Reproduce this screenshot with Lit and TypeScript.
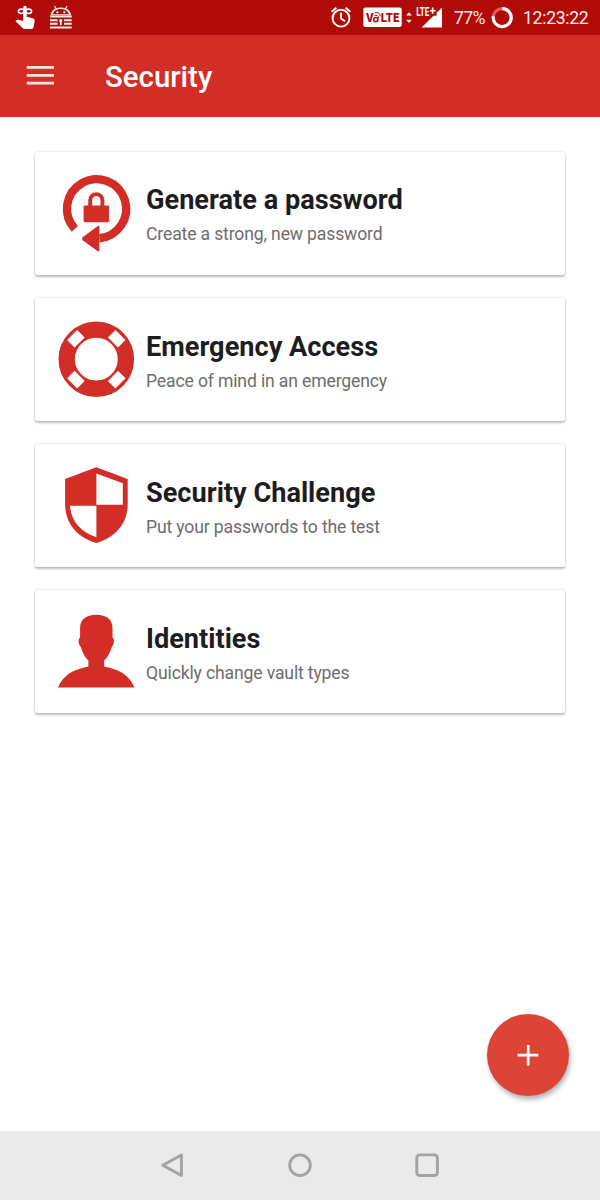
import { LitElement, html, css, svg } from "lit";
import { customElement } from "lit/decorators.js";

const generateIcon = svg`
  <path d="M74.8 228.4A29.6 29.6 0 1 1 99.5 237.8" fill="none" stroke="#d32d27" stroke-width="8.4"/>
  <path d="M83.2 237.6L98.4 226.4V250L83.2 239Z" fill="#d32d27" stroke="#d32d27" stroke-width="2" stroke-linejoin="round"/>
  <rect x="83.6" y="205" width="25.4" height="16.8" rx="1.3" fill="#d32d27"/>
  <path d="M90.2 206v-6.3a6.1 6.1 0 0 1 12.2 0v6.3" fill="none" stroke="#d32d27" stroke-width="3.9"/>`;

const emergencyIcon = svg`
  <circle cx="96.3" cy="358.7" r="29.6" fill="none" stroke="#d32d27" stroke-width="16.4"/>
  <g fill="#fff">
    ${[45, 135, 225, 315].map(
      (a) => svg`<rect x="-7.1" y="-34.2" width="14.2" height="10.6" transform="translate(96.3 358.7) rotate(${a})"/>`
    )}
  </g>`;

const challengeIcon = svg`
  <path fill="#d32d27" d="M96.3 467.3L127.7 479V504C127.7 523.5 115.5 537.5 96.3 543C77.1 537.5 65.1 523.5 65.1 504V479Z"/>
  <path fill="#fff" d="M96.4 473.4L122.8 483.3V504.7H96.4ZM96.4 505.7V537.2C81.2 532.3 71 521.5 70 505.7Z"/>`;

const identityIcon = svg`
  <path fill="#d32d27" d="M96.3 614.7C106.5 614.7 112.5 619.5 112.5 628V637.6C114.6 638.6 114.5 644.5 111.8 647C110.2 652.5 107.6 657.5 104.2 660.6V666.4C118.5 669 130 675 134.4 687.6H58C62.6 675 74.2 669 88.4 666.4V660.6C85 657.5 82.4 652.5 80.8 647C78.1 644.5 78 638.6 80.1 637.6V628C80.1 619.5 86.1 614.7 96.3 614.7Z"/>`;

const items = [
  { title: "Generate a password", text: "Create a strong, new password", icon: generateIcon, box: "51 151.5 90 123" },
  { title: "Emergency Access", text: "Peace of mind in an emergency", icon: emergencyIcon, box: "51 297.5 90 123" },
  { title: "Security Challenge", text: "Put your passwords to the test", icon: challengeIcon, box: "51 444 90 123" },
  { title: "Identities", text: "Quickly change vault types", icon: identityIcon, box: "51 590 90 123" },
];

@customElement("status-bar")
class StatusBar extends LitElement {
  static styles = css`
    :host { display: flex; height: 35px; background: #b00b09; color: #fde9e6; font-size: 17.6px; line-height: 36px; }
    svg { display: block; flex: none; }
    .spacer { flex: 1; }
    .percent { width: 36px; white-space: nowrap; letter-spacing: -0.6px; }
    .clock { width: 77px; white-space: nowrap; letter-spacing: -0.3px; }
    .tag { font: 900 12px Roboto, sans-serif; fill: #b00b09; }
    .net { font: 700 12px "Roboto", sans-serif; fill: #fff; }
  `;
  render() {
    return html`
      <svg width="90" height="35" viewBox="0 0 90 35">
        <g fill="none" stroke="#fff" stroke-width="1.6">
          <ellipse cx="21.3" cy="11.3" rx="2.9" ry="2.2"/><ellipse cx="28.7" cy="11.3" rx="2.9" ry="2.2"/>
        </g>
        <path fill="#fff" d="M23.2 8Q23.2 5.7 25 5.7Q26.8 5.7 26.8 8V16.8L33.4 18.6Q35 19.2 34.7 21L33.5 27.3Q33.1 29 31.5 29H24.6Q23.5 29 22.6 28L15.4 21.1L16.7 20Q17.4 19.5 18.5 19.8L23.2 21Z"/>
        <path fill="#ffeaea" d="M50.5 15.3C51.2 10.2 55.3 7.5 60.8 7.5S70.4 10.2 71.1 15.3Z"/>
        <path d="M54.4 6L57 10M67.2 6L64.6 10" stroke="#ffeaea" stroke-width="1.2"/>
        <path d="M52.6 14.3C53.8 10.7 56.6 9 60.8 9S67.8 10.7 69 14.3Z" fill="#b00b09"/>
        <circle cx="57.3" cy="12.3" r="1.1" fill="#fff"/><circle cx="64.3" cy="12.3" r="1.1" fill="#fff"/>
        <path d="M50 16.6H71.7M50 20.2H71.7M50 23.8H71.7M50 27.4H71.7" stroke="#ffeaea" stroke-width="2"/>
        <rect x="57.6" y="18.4" width="6.4" height="7.2" fill="#b00b09"/>
        <circle cx="60.8" cy="20.7" r="1.6" fill="#fff"/><path d="M60.8 20v5.2" stroke="#fff" stroke-width="1.6"/>
      </svg>
      <div class="spacer"></div>
      <svg width="124" height="35" viewBox="330 0 124 35">
        <g fill="none" stroke="#fff" stroke-width="1.9">
          <circle cx="341" cy="18.2" r="8.4"/>
          <path d="M341 12.8V18.6L345 21.2M331.6 11.8L336.4 7.8M350.4 11.8L345.6 7.8"/>
        </g>
        <rect x="363.3" y="7.6" width="38.4" height="19.4" rx="2" fill="#fff"/>
        <text class="tag" x="366" y="22" textLength="7.6" lengthAdjust="spacingAndGlyphs">V</text>
        <circle cx="375.8" cy="19.6" r="2.1" fill="none" stroke="#b00b09" stroke-width="1.5"/>
        <text class="tag" x="380.8" y="22" textLength="18.6" lengthAdjust="spacingAndGlyphs">LTE</text>
        <path d="M374.4 15.3Q378 14.5 378.5 18M374.8 12.7Q380 11.7 380.3 16.4" fill="none" stroke="#b00b09" stroke-width="1"/>
        <path fill="#fff" d="M409 12.3L411.8 15.6H406.2ZM409 23L411.8 19.7H406.2Z"/>
        <path fill="#fff" d="M442 7.6V27.5H421.5L433.6 15.8H436.6V12.8Z"/>
        <text class="net" x="416.2" y="16.4" textLength="13.2" lengthAdjust="spacingAndGlyphs">LTE</text>
        <path d="M432.6 7.6V13.8M429.8 10.7H435.6" stroke="#fff" stroke-width="1.6"/>
      </svg>
      <span class="percent">77%</span>
      <svg width="33" height="35" viewBox="490 0 33 35">
        <g fill="none" stroke-width="3.1"><circle cx="502.2" cy="17.6" r="9" stroke="#df5f5a"/><path d="M502.2 8.6A9 9 0 1 1 493.3 16.2" stroke="#fff"/></g>
      </svg>
      <span class="clock">12:23:22</span>`;
  }
}

@customElement("app-root")
class AppRoot extends LitElement {
  static styles = css`
    :host { display: flex; flex-direction: column; height: 1200px; background: #fff; font-family: Roboto, sans-serif; position: relative; overflow: hidden; }
    svg { display: block; flex: none; }
    header { display: flex; align-items: center; height: 81.6px; background: #d32d27; color: #fff; flex: none; }
    header svg { margin-left: 26px; }
    h1 { margin: 3px 0 0 51px; font-size: 29.4px; font-weight: 500; }
    main { flex: 1; display: flex; flex-direction: column; gap: 23.2px; padding: 35px 35px 0; }
    .card { display: flex; height: 123px; box-sizing: border-box; padding-left: 16px; border-radius: 2.5px; background: #fff; box-shadow: 0 1.5px 2.5px rgba(0,0,0,.25), 0 0 2px rgba(0,0,0,.15); }
    .copy { padding: 31.8px 0 0 5px; white-space: nowrap; }
    h2 { margin: 0; font-size: 27.15px; line-height: 34px; font-weight: 700; color: #1d1d1f; }
    p { margin: 6px 0 0; font-size: 17.6px; letter-spacing: -0.15px; line-height: 22px; color: #6d6d6d; }
    .fab { position: absolute; left: 487px; top: 1014px; width: 82px; height: 82px; padding: 0; border: 0; border-radius: 50%; background: #db4437; box-shadow: 1.5px 3.5px 5px rgba(0,0,0,.3); }
    nav { height: 69.5px; flex: none; background: #eaeaea; }
  `;
  render() {
    return html`
      <status-bar></status-bar>
      <header>
        <svg width="28" height="22" viewBox="0 0 28 22"><path d="M.8 2.4H28M.8 10.4H28M.8 18.2H28" stroke="#fbe5e2" stroke-width="2.8"/></svg>
        <h1>Security</h1>
      </header>
      <main>
        ${items.map(
          (i) => html`<section class="card">
            <svg width="90" height="123" viewBox=${i.box}>${i.icon}</svg>
            <div class="copy"><h2>${i.title}</h2><p>${i.text}</p></div>
          </section>`
        )}
      </main>
      <button class="fab" aria-label="Add">
        <svg width="82" height="82" viewBox="0 0 82 82"><path d="M30.7 41.2H51.3M41.2 30.9V51.5" stroke="#fff" stroke-width="2.7"/></svg>
      </button>
      <nav>
        <svg width="600" height="69.5" viewBox="0 1130.5 600 69.5">
          <g fill="none" stroke="#a3a3a3" stroke-width="2.9" stroke-linejoin="round">
            <path d="M162.8 1164.7L181.4 1154.4V1175Z"/>
            <circle cx="300" cy="1164.7" r="10.3"/>
            <rect x="416.8" y="1154.4" width="20.6" height="20.6" rx="3"/>
          </g>
        </svg>
      </nav>`;
  }
}
